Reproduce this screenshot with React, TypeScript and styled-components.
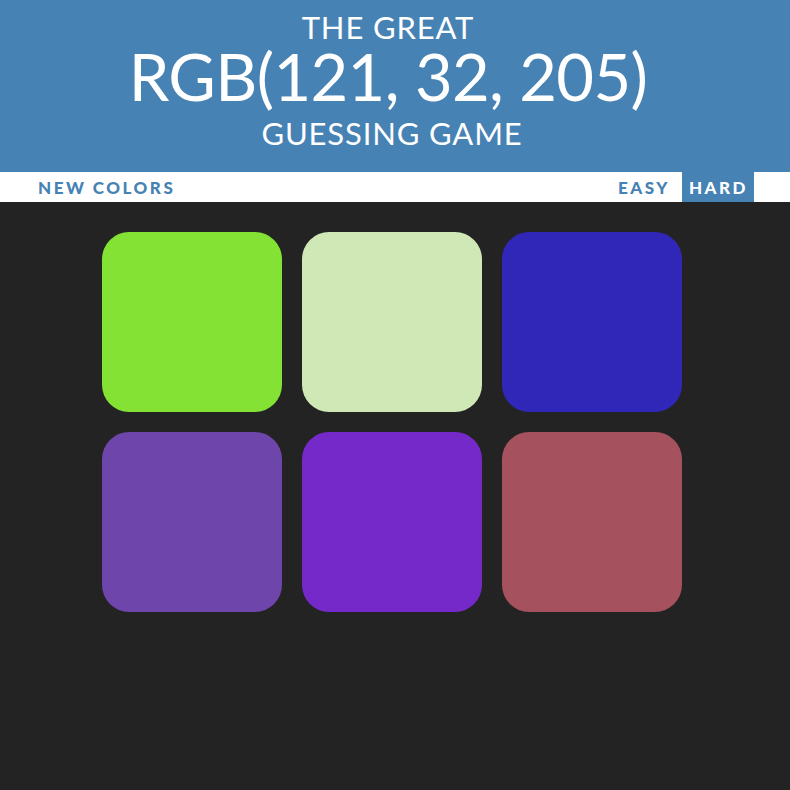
import React from "react";
import styled, { createGlobalStyle } from "styled-components";

const Global = createGlobalStyle`
  html, body { margin: 0; padding: 0; background: #232323; }
  body { font-family: Lato, "Open Sans", "Liberation Sans", sans-serif; }
`;

const Page = styled.div`
  min-height: 790px;
  background: #232323;
`;

const Header = styled.h1`
  margin: 0;
  height: 172px;
  box-sizing: border-box;
  padding-top: 8px;
  background: #4682b4;
  color: #fff;
  text-align: center;
  font-weight: 400;
  text-transform: uppercase;
  display: flex;
  flex-direction: column;
  align-items: center;
`;

const Small = styled.span<{ $nudge: number }>`
  font-size: 31px;
  line-height: 38px;
  letter-spacing: 0.85px;
  padding-right: ${(p) => p.$nudge}px;
`;

const Big = styled.span`
  font-size: 65px;
  line-height: 61px;
  letter-spacing: -0.6px;
  margin-bottom: 7px;
  padding-right: 14px;
`;

const Stripe = styled.nav`
  height: 30px;
  background: #fff;
  display: flex;
  align-items: stretch;
  justify-content: space-between;
  padding: 0 36px 0 31px;
`;

const Modes = styled.div`
  display: flex;
  align-items: stretch;
  gap: 6px;
`;

const NavButton = styled.button<{ $active?: boolean }>`
  border: none;
  outline: none;
  margin: 0;
  padding: 0 6px 0 7px;
  height: 30px;
  background: ${(p) => (p.$active ? "#4682b4" : "#fff")};
  color: ${(p) => (p.$active ? "#fff" : "#4682b4")};
  font-family: Lato, "Open Sans", "Liberation Sans", sans-serif;
  font-weight: 900;
  font-size: 17px;
  letter-spacing: 2.5px;
  text-transform: uppercase;
  cursor: pointer;
`;

const Board = styled.div`
  display: grid;
  grid-template-columns: repeat(3, 180px);
  grid-auto-rows: 180px;
  gap: 20px;
  justify-content: start;
  padding: 30px 0 0 102px;
`;

const Square = styled.div<{ $color: string }>`
  background: ${(p) => p.$color};
  border-radius: 27px;
`;

const colors = ["#84e234", "#d0e8b6", "#3027b8", "#6e45ab", "#7629c9", "#a5525e"];

export default function App() {
  return (
    <Page>
      <Global />
      <Header>
        <Small $nudge={14}>The Great</Small>
        <Big>RGB(121, 32, 205)</Big>
        <Small $nudge={6}>Guessing Game</Small>
      </Header>
      <Stripe>
        <NavButton>New Colors</NavButton>
        <Modes>
          <NavButton>Easy</NavButton>
          <NavButton $active>Hard</NavButton>
        </Modes>
      </Stripe>
      <Board>
        {colors.map((c, i) => (
          <Square key={i} $color={c} />
        ))}
      </Board>
    </Page>
  );
}
